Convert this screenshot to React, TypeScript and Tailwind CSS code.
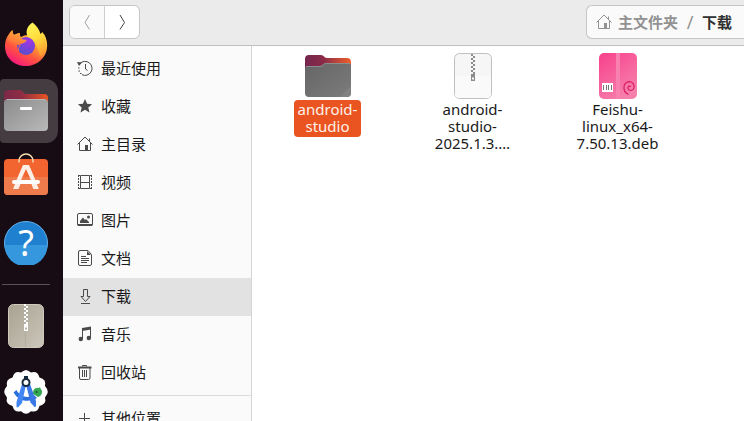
import type { ReactNode } from "react";
import clsx from "clsx";

/* Dock icons */

const FirefoxIcon = () => (
  <svg viewBox="0 0 44 46" className="h-[46px] w-11" aria-hidden="true">
    <defs>
      <linearGradient id="fxBody" x1="0.9" y1="0.1" x2="0.3" y2="1">
        <stop offset="0" stopColor="#ffe04a" />
        <stop offset="0.35" stopColor="#ffa233" />
        <stop offset="0.65" stopColor="#ff5340" />
        <stop offset="1" stopColor="#f8187f" />
      </linearGradient>
      <linearGradient id="fxTail" x1="0.3" y1="0" x2="0.6" y2="1">
        <stop offset="0" stopColor="#fff556" />
        <stop offset="0.5" stopColor="#ffd93c" />
        <stop offset="1" stopColor="#ff9b30" />
      </linearGradient>
      <linearGradient id="fxHead" x1="0.7" y1="0" x2="0.2" y2="1">
        <stop offset="0" stopColor="#ffb13b" />
        <stop offset="1" stopColor="#ff6a3a" />
      </linearGradient>
      <radialGradient id="fxGlobe" cx="0.65" cy="0.2" r="0.85">
        <stop offset="0" stopColor="#a336e8" />
        <stop offset="0.6" stopColor="#7445d6" />
        <stop offset="1" stopColor="#5550cc" />
      </radialGradient>
    </defs>
    <path d="M8.500 8C8.400 10 9 12 10 13C12 12 14 11 16 11C15.500 13 16 14 17 15C22 12 29 12 33 18L40 12C43 17 43.500 22 43 26C42 36 33 44 22 44C10 44 1 36 1 24C1 19 2.500 15 5 12C5.500 11 7 9 8.500 8Z" fill="url(#fxBody)" />
    <path d="M28.500 .5C33 4 35.500 8 36.500 12L38.500 10C44 18 43 29 36 35C35 27 31 19 24 15C21 10 23 4 28.500 .5Z" fill="url(#fxTail)" />
    <circle cx="22" cy="24" r="9" fill="url(#fxGlobe)" />
    <path d="M8.500 8C8.400 10 9 12 10 13C12 12 14 11 16 11C15.500 13 16 14 17 16C18 17.500 21 17.500 22.500 18C22.500 21 18 21 15.500 23C13 23 9 20 4 18C4.500 15 6 11 8.500 8Z" fill="url(#fxHead)" />
    <path d="M13 22.500C14 22 16 23 16 23.500C15 25 13.500 26 14.500 29" fill="none" stroke="#ff6a3f" />
  </svg>
);

const FilesIcon = () => (
  <svg viewBox="0 0 44 42" className="h-[42px] w-11" aria-hidden="true">
    <defs>
      <linearGradient id="filesBack" x1="0" x2="1">
        <stop offset="0" stopColor="#7b2848" />
        <stop offset="0.4" stopColor="#8f2c45" />
        <stop offset="1" stopColor="#e95420" />
      </linearGradient>
      <linearGradient id="filesFront" x1="0" y1="0" x2="1" y2="1">
        <stop offset="0" stopColor="#8b8b8b" />
        <stop offset="1" stopColor="#b9b9b9" />
      </linearGradient>
    </defs>
    <path d="M0 20V4a4 4 0 0 1 4-4h12c3 0 3 4 6 4h18a4 4 0 0 1 4 4v12z" fill="url(#filesBack)" />
    <rect y="9" width="44" height="32" rx="4" fill="url(#filesFront)" />
    <path d="M3 9.500h38" stroke="#b9b9b9" />
    <rect x="16" y="17" width="12" height="3" rx="1" fill="#fff" />
  </svg>
);

const SoftwareIcon = () => (
  <svg viewBox="0 0 44 48" className="h-12 w-11" aria-hidden="true">
    <rect y="6" width="44" height="36" rx="4" fill="#f26430" />
    <path d="M0 24h44v14a4 4 0 0 1-4 4H4a4 4 0 0 1-4-4z" fill="#ef7a4c" />
    <path d="M15 9.500V8a7 7 0 0 1 14 0v1.500" fill="none" stroke="#f5dfb0" strokeWidth="1.500" />
    <path d="M19 12h6l4.800 11h-4.600L22 16l-3.200 7h-4.600z" fill="#fdeee6" />
    <path d="M14.200 23h4.600l-2 4.500h10.400l-2-4.500h4.600l5 13h-5.500L27.500 31h-11L14.500 36H9z" fill="#fdeee6" />
    <rect x="8" y="27" width="28" height="4" rx="2" fill="#fff" />
  </svg>
);

const HelpIcon = () => (
  <svg viewBox="0 0 44 44" className="h-11 w-11" aria-hidden="true">
    <circle cx="22" cy="22" r="21.500" fill="#2080d0" stroke="#64b3ea" />
    <path d="M.5 24h43a21.500 21.500 0 0 1-43 0z" fill="#3598df" />
    <text x="22" y="35" textAnchor="middle" fontSize="36" fill="#fff">?</text>
  </svg>
);

const Zipper = ({ fill }: { fill: string }) => (
  <g fill={fill}>
    {[0, 1, 2, 3, 4, 5, 6, 7, 8, 9].map((row) => (
      <rect key={row} x={row % 2 ? 2 : 0} y={row * 2} width="2" height="2" />
    ))}
    <path fillRule="evenodd" d="M0 20h4v7H0zM1 23.500v2h2v-2z" />
  </g>
);

const ArchiveIcon = () => (
  <svg viewBox="0 0 38 46" className="h-[46px] w-[38px]" aria-hidden="true">
    <defs>
      <linearGradient id="archiveBox" x1="0" y1="0" x2="1" y2="1">
        <stop offset="0" stopColor="#a8a291" />
        <stop offset="1" stopColor="#cbc6ba" />
      </linearGradient>
    </defs>
    <rect x="1.500" y="1.500" width="35" height="43" rx="5" fill="url(#archiveBox)" stroke="#d0cabc" />
    <path d="M18.500 28v16" stroke="#b3ad9e" />
    <g transform="translate(17 1)">
      <Zipper fill="#fff" />
    </g>
  </svg>
);

const AndroidStudioIcon = () => (
  <svg viewBox="0 0 44 44" className="h-11 w-11" aria-hidden="true">
    <path
      d="M22 0Q24 0 27 2.500Q31 1.500 33 3Q34.500 4 35.500 7.500Q39 8.500 40.500 10.500Q41.500 12 41 16Q43.800 19 43.800 22Q43.800 24 41 27.500Q42 31 40.500 33Q39 35 35.500 36Q34.500 39.500 33 40.500Q31 42 27 41.200Q24 43.800 22 43.800Q20 43.800 17 41.200Q13 42 11 40.500Q9.500 39.500 8.500 36Q5 35 3.500 33Q2 31 3 27.500Q.2 24 .2 22Q.2 19 3 16Q2.500 12 3.500 10.500Q5 8.500 8.500 7.500Q9.500 4 11 3Q13 1.500 17 2.500Q20 0 22 0Z"
      fill="#fff"
    />
    <path d="M29 24v-2a4.500 4.500 0 0 1 6-4l1-1 .5 1.500A5 5 0 0 1 34 27z" fill="#34a853" />
    <circle cx="32.500" cy="22" r="1" fill="#16502a" />
    <path d="M9.500 22.500l3-2.500c2 4 6 7 11 7l7-1.500 2.500 2.500c-6 4-17 5-23.500-5.500z" fill="#2b6fdc" />
    <path d="M18.500 12.500h4L18 33l-4 4.500-1.500-.5v-5z" fill="#4285f4" />
    <path d="M21.500 12.500h4L32 31v5.500l-1.500.5-4-4.500z" fill="#3a78e6" />
    <circle cx="22" cy="12.500" r="3.500" fill="#fff" stroke="#16283b" strokeWidth="2" />
    <path d="M20 6h4v3h-4z" fill="#16283b" />
  </svg>
);

/* Symbolic icons, all on a 16px grid */

const Symbolic = ({ children }: { children: ReactNode }) => (
  <svg
    viewBox="0 0 16 16"
    className="h-4 w-4 shrink-0"
    fill="none"
    stroke="currentColor"
    aria-hidden="true"
  >
    {children}
  </svg>
);

const RecentIcon = () => (
  <Symbolic>
    <path d="M3 3.500A7 7 0 1 1 5 14.700" />
    <path d="M1 8h1.500M1.500 11h1.500M3 13.500h1.500" />
    <path d="M8.500 4v5l2 1.500" />
    <path d="M0 2l5 .5L2 6z" fill="currentColor" stroke="none" />
  </Symbolic>
);

const StarIcon = () => (
  <Symbolic>
    <path d="M8 1l2.100 4.700 5 .5-3.800 3.300 1.200 5L8 11.800l-4.500 2.700 1.200-5L.9 6.200l5-.5z" fill="currentColor" stroke="none" />
  </Symbolic>
);

const HomeIcon = () => (
  <Symbolic>
    <path d="M.5 8.500L8 1l7.500 7.500M2.500 7v7.500h11V7M12.500 5V2.500" />
    <path d="M8 9h3v6H8z" fill="currentColor" stroke="none" />
  </Symbolic>
);

const VideoIcon = () => (
  <Symbolic>
    <path d="M3.500 1.500h9v13h-9zM3.500 8.500h9" />
    <path d="M1 1.500h2M1 14.500h2M13 1.500h2M13 14.500h2" />
    <path d="M1.500 1v14M14.500 1v14" strokeDasharray="2 1" />
  </Symbolic>
);

const PictureIcon = () => (
  <Symbolic>
    <rect x=".5" y="1.500" width="15" height="12" rx="1.500" />
    <path d="M1 12.500h14v1H1z" fill="currentColor" />
    <path d="M3 11V9l3-3.500 2 2.500 1-1 3 3v1z" fill="currentColor" stroke="none" />
    <circle cx="11.500" cy="5" r="1.500" fill="currentColor" stroke="none" />
  </Symbolic>
);

const DocumentIcon = () => (
  <Symbolic>
    <path d="M3 .5h8l3.500 4V14a1.500 1.500 0 0 1-1.500 1.500H3A1.500 1.500 0 0 1 1.500 14V2A1.500 1.500 0 0 1 3 .5z" />
    <path d="M10 1v4h4z" fill="currentColor" stroke="none" />
    <path d="M4 6.500h5M4 8.500h8M4 10.500h8M4 12.500h6" />
  </Symbolic>
);

const DownloadIcon = () => (
  <Symbolic>
    <path d="M6.500 1.500h4v7H13L8.500 13.500 4 8.500h2.500zM4 15.500h9" />
  </Symbolic>
);

const MusicIcon = () => (
  <Symbolic>
    <path d="M5 2l9-1.500v3L5 5z" fill="currentColor" stroke="none" />
    <path d="M5.500 3v10M13.500 2v10" />
    <circle cx="3.800" cy="13" r="2.200" fill="currentColor" stroke="none" />
    <circle cx="11.800" cy="12" r="2.200" fill="currentColor" stroke="none" />
  </Symbolic>
);

const TrashIcon = () => (
  <Symbolic>
    <path d="M5.500 2.500v-1h4v1M2.500 4v10q0 1.500 1.500 1.500h7.500q1.500 0 1.500-1.500V4" />
    <path d="M1 3.500h13.500" strokeWidth="2" />
    <path d="M5.500 6v7M7.500 6v7M9.500 6v7" />
  </Symbolic>
);

const PlusIcon = () => (
  <Symbolic>
    <path d="M2 8.500h11M7.500 3v11" />
  </Symbolic>
);

/* File icons */

const FolderIcon = () => (
  <svg viewBox="0 0 48 48" className="h-12 w-12" aria-hidden="true">
    <defs>
      <linearGradient id="folderBack" x1="0" x2="1">
        <stop offset="0" stopColor="#74264f" />
        <stop offset="0.4" stopColor="#8a2b48" />
        <stop offset="1" stopColor="#f0602a" />
      </linearGradient>
      <linearGradient id="folderFront" x1="0" x2="1" y2="1">
        <stop offset="0" stopColor="#656565" />
        <stop offset="1" stopColor="#7c7c7c" />
      </linearGradient>
    </defs>
    <path d="M1 20V7a4 4 0 0 1 4-4h12c3 0 3 3 6 3h20a4 4 0 0 1 4 4v12z" fill="url(#folderBack)" />
    <path d="M1 17a3 3 0 0 1 3-3h12c3 0 3-3 6-3h22a3 3 0 0 1 3 3v27a4 4 0 0 1-4 4H5a4 4 0 0 1-4-4z" fill="url(#folderFront)" />
    <path d="M2 14.500h14c3 0 3-3 6-3h24" fill="none" stroke="#8d8d8d" />
    <path d="M47 34v7a4 4 0 0 1-4 4h-7z" fill="#828282" />
  </svg>
);

const ZipIcon = () => (
  <svg viewBox="0 0 48 48" className="h-12 w-12" aria-hidden="true">
    <rect x="5.500" y="1.500" width="37" height="45" rx="5" fill="#f6f6f6" stroke="#c0c0c0" />
    <path d="M6 24h36v18a4 4 0 0 1-4 4H10a4 4 0 0 1-4-4z" fill="#fafafa" />
    <g transform="translate(22 2)">
      <Zipper fill="#8c8c8c" />
    </g>
  </svg>
);

const DebIcon = () => (
  <svg viewBox="0 0 48 48" className="h-12 w-12" aria-hidden="true">
    <defs>
      <linearGradient id="debBox" x1="0" y1="0" x2="0.6" y2="1">
        <stop offset="0" stopColor="#f8408b" />
        <stop offset="1" stopColor="#f67fac" />
      </linearGradient>
    </defs>
    <rect x="5" y="1" width="38" height="46" rx="5" fill="url(#debBox)" />
    <path d="M22 1h4v46h-4z" fill="#f981af" />
    <path d="M8 31h11v9H8z" fill="#fff" />
    <path d="M9.500 33v5M12.500 33v5M14.500 33v5M17.500 33v5" stroke="#777" />
    <path d="M34.500 42.500c-3-1.500-5-4.500-4.500-8 .5-3.500 4-5.500 7-4.500 3 1 4 4.500 2.500 7-1.500 2-5 2-5.500-.5-.3-2 1.500-3 3-2" fill="none" stroke="#d81b60" strokeWidth="1.200" />
  </svg>
);

const dockApps = [
  { name: "Firefox", icon: <FirefoxIcon /> },
  { name: "文件", icon: <FilesIcon />, active: true },
  { name: "Ubuntu Software", icon: <SoftwareIcon /> },
  { name: "帮助", icon: <HelpIcon /> },
];

const dockRunning = [
  { name: "归档管理器", icon: <ArchiveIcon /> },
  { name: "Android Studio", icon: <AndroidStudioIcon /> },
];

const places = [
  { name: "最近使用", icon: <RecentIcon /> },
  { name: "收藏", icon: <StarIcon /> },
  { name: "主目录", icon: <HomeIcon /> },
  { name: "视频", icon: <VideoIcon /> },
  { name: "图片", icon: <PictureIcon /> },
  { name: "文档", icon: <DocumentIcon /> },
  { name: "下载", icon: <DownloadIcon />, current: true },
  { name: "音乐", icon: <MusicIcon /> },
  { name: "回收站", icon: <TrashIcon /> },
];

const files = [
  { name: "android-studio", icon: <FolderIcon />, selected: true },
  { name: "android-studio-2025.1.3.…", icon: <ZipIcon /> },
  { name: "Feishu-linux_x64-7.50.13.deb", icon: <DebIcon /> },
];

interface ItemProps {
  name: string;
  icon: ReactNode;
  active?: boolean;
}

const DockButton = ({ name, icon, active }: ItemProps) => (
  <button
    type="button"
    aria-label={name}
    className={clsx(
      "my-px flex h-16 w-[58px] shrink-0 items-center justify-center rounded-l-sm rounded-r-xl pr-1.5",
      active && "bg-[#453c42]"
    )}
  >
    {icon}
  </button>
);

const PlaceButton = ({ name, icon, active }: ItemProps) => (
  <button
    type="button"
    className={clsx(
      "flex h-[38px] w-full shrink-0 items-center gap-2 pb-0.5 pl-3.5 text-left text-[15px]",
      active && "bg-[#e2e2e2]"
    )}
  >
    <span className="text-[#4a4a4a]">{icon}</span>
    {name}
  </button>
);

export default function App() {
  return (
    <div className="flex h-screen overflow-hidden bg-white font-['Noto_Sans','Noto_Sans_CJK_SC',sans-serif] text-[#1a1a1a]">
      {/* Dock */}
      <nav className="flex w-[63px] shrink-0 flex-col overflow-hidden bg-[#180c14] pt-3">
        {dockApps.map((app) => (
          <DockButton key={app.name} name={app.name} icon={app.icon} active={app.active} />
        ))}
        <hr className="my-2 ml-0.5 w-12 shrink-0 border-[#5a5158]" />
        {dockRunning.map((app) => (
          <DockButton key={app.name} name={app.name} icon={app.icon} />
        ))}
      </nav>

      <div className="flex min-w-0 flex-1 flex-col">
        {/* Header bar */}
        <header className="flex h-[46px] shrink-0 items-start justify-between border-b border-[#bfbfbf] bg-[#ebebeb] pt-[5px] pl-1.5">
          <div className="flex h-[34px] divide-x divide-[#cdcdcd] overflow-hidden rounded-md border border-[#c6c6c6] bg-white">
            <button type="button" aria-label="后退" className="flex w-[35px] items-center justify-center bg-[#fafafa] text-[#a0a0a0]">
              <Symbolic>
                <path d="M10.500 1L6 8.500l4.500 7" />
              </Symbolic>
            </button>
            <button type="button" aria-label="前进" className="flex w-[34px] items-center justify-center text-[#404040]">
              <Symbolic>
                <path d="M6 1l4.500 7.500L6 15.500" />
              </Symbolic>
            </button>
          </div>
          <div className="flex h-[34px] w-[158px] items-center rounded-l-md border border-r-0 border-[#c6c6c6] bg-[#fafafa] pl-[9px] text-[15px] font-bold whitespace-nowrap text-[#929292]">
            <button type="button" className="flex items-center gap-1.5">
              <HomeIcon />
              主文件夹
            </button>
            <span className="w-6 text-center text-lg font-normal">/</span>
            <button type="button" className="text-[#303030]">下载</button>
          </div>
        </header>

        <div className="flex min-h-0 flex-1">
          {/* Places */}
          <aside className="flex w-[189px] shrink-0 flex-col overflow-hidden border-r border-[#d5d5d5] bg-[#fafafa] pt-1">
            {places.map((place) => (
              <PlaceButton key={place.name} name={place.name} icon={place.icon} active={place.current} />
            ))}
            <hr className="mt-[3px] mb-1 shrink-0 border-[#dcdcdc]" />
            <PlaceButton name="其他位置" icon={<PlusIcon />} />
          </aside>

          {/* Files */}
          <main className="flex min-w-0 flex-1 flex-wrap content-start pt-1.5 pl-[3px]">
            {files.map((file) => (
              <button
                key={file.name}
                type="button"
                className="flex w-[145px] flex-col items-center text-[15px] leading-[17px]"
              >
                {file.icon}
                <span
                  className={clsx(
                    "w-min rounded px-1 pt-px pb-0.5",
                    file.selected && "bg-[#e95420] text-[#fff1ea]"
                  )}
                >
                  {file.name}
                </span>
              </button>
            ))}
          </main>
        </div>
      </div>
    </div>
  );
}
